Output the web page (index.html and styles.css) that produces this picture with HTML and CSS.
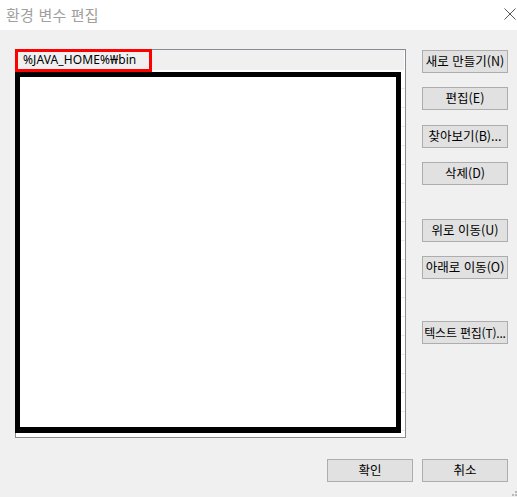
FILE: index.html
```html
<!DOCTYPE html>
<html lang="ko">
<head>
<meta charset="utf-8">
<link rel="stylesheet" href="styles.css">
</head>
<body>
<div class="window">
  <div class="titlebar">
    <span class="title">환경 변수 편집</span>
    <svg class="close" width="12" height="12" viewBox="0 0 12 12"><path d="M0.5 0.5L11.5 11.5M11.5 0.5L0.5 11.5" stroke="#555" stroke-width="1" fill="none"/></svg>
  </div>
  <div class="content">
    <div class="main">
      <div class="list">
        <div class="item">%JAVA_HOME%₩bin</div>
        <div class="mark-red"></div>
        <div class="mark-black"></div>
      </div>
      <div class="side">
        <button class="btn">새로 만들기(N)</button>
        <button class="btn">편집(E)</button>
        <button class="btn">찾아보기(B)...</button>
        <button class="btn">삭제(D)</button>
        <button class="btn gap-lg">위로 이동(U)</button>
        <button class="btn">아래로 이동(O)</button>
        <button class="btn gap-xl tight">텍스트 편집(T)...</button>
      </div>
    </div>
    <div class="footer">
      <button class="btn">확인</button>
      <button class="btn">취소</button>
    </div>
    <svg class="grip" width="7" height="7" viewBox="0 0 7 7" fill="#b8b8b8"><rect x="5" y="1" width="2" height="2"/><rect x="2" y="4" width="2" height="2"/><rect x="5" y="4" width="2" height="2"/></svg>
  </div>
</div>
</body>
</html>
```

FILE: styles.css
```css
html, body {
  margin: 0;
  padding: 0;
}
body {
  width: 517px;
  height: 497px;
  overflow: hidden;
  font-family: "Noto Sans CJK KR", "Noto Sans", sans-serif;
}
.window {
  width: 517px;
  height: 497px;
  display: flex;
  flex-direction: column;
  background: #f0f0f0;
}
.titlebar {
  height: 30px;
  background: #ffffff;
  display: flex;
  align-items: center;
  justify-content: space-between;
  padding: 0 1px 0 6px;
  flex-shrink: 0;
}
.title {
  font-size: 15px;
  color: #a0a0a0;
  letter-spacing: 0.2px;
  line-height: 1;
  margin-top: -1px;
}
.close {
  margin-top: -3px;
}
.content {
  flex: 1;
  position: relative;
  padding: 19px 9px 0 15px;
  display: flex;
  flex-direction: column;
}
.main {
  display: flex;
  gap: 16px;
  align-items: flex-start;
}
.list {
  position: relative;
  width: 389px;
  height: 387px;
  border: 1px solid #868a91;
  background-color: #ffffff;
  background-image: repeating-linear-gradient(to bottom, transparent 0, transparent 18px, #ececec 18px, #ececec 19px);
  background-position: 0 20px;
  background-repeat: no-repeat;
  background-size: 100% 370px;
}
.item {
  height: 20px;
  background: #f0f0f0;
  font-family: "Noto Sans", "Noto Sans CJK KR", sans-serif;
  font-size: 12px;
  line-height: 20px;
  padding-left: 7px;
  color: #000;
  margin-right: 1px;
  letter-spacing: 0.1px;
}
.mark-red {
  position: absolute;
  left: -1px;
  top: -1px;
  width: 131px;
  height: 17px;
  border: 3px solid #ff0000;
}
.mark-black {
  position: absolute;
  left: -1px;
  top: 22px;
  width: 376px;
  height: 350px;
  border: 5px solid #000000;
  border-bottom-width: 6px;
  background: #ffffff;
}
.side {
  display: flex;
  flex-direction: column;
  gap: 14px;
  padding-top: 1px;
}
.btn {
  width: 86px;
  height: 23px;
  box-sizing: border-box;
  border: 1px solid #adadad;
  background: #e1e1e1;
  font-family: "Noto Sans CJK KR", sans-serif;
  font-size: 12.5px;
  color: #000;
  padding: 0;
  margin: 0;
  line-height: 1;
  white-space: nowrap;
  letter-spacing: 0;
}
.btn.tight {
  font-size: 12px;
  letter-spacing: -0.2px;
}
.side .btn:nth-child(3) { margin-top: 1px; }
.gap-lg {
  margin-top: 20px;
}
.gap-xl {
  margin-top: 28px;
}
.footer {
  display: flex;
  justify-content: flex-end;
  gap: 9px;
  margin-top: 21px;
}
.grip {
  position: absolute;
  right: 0;
  bottom: 0;
}
```
